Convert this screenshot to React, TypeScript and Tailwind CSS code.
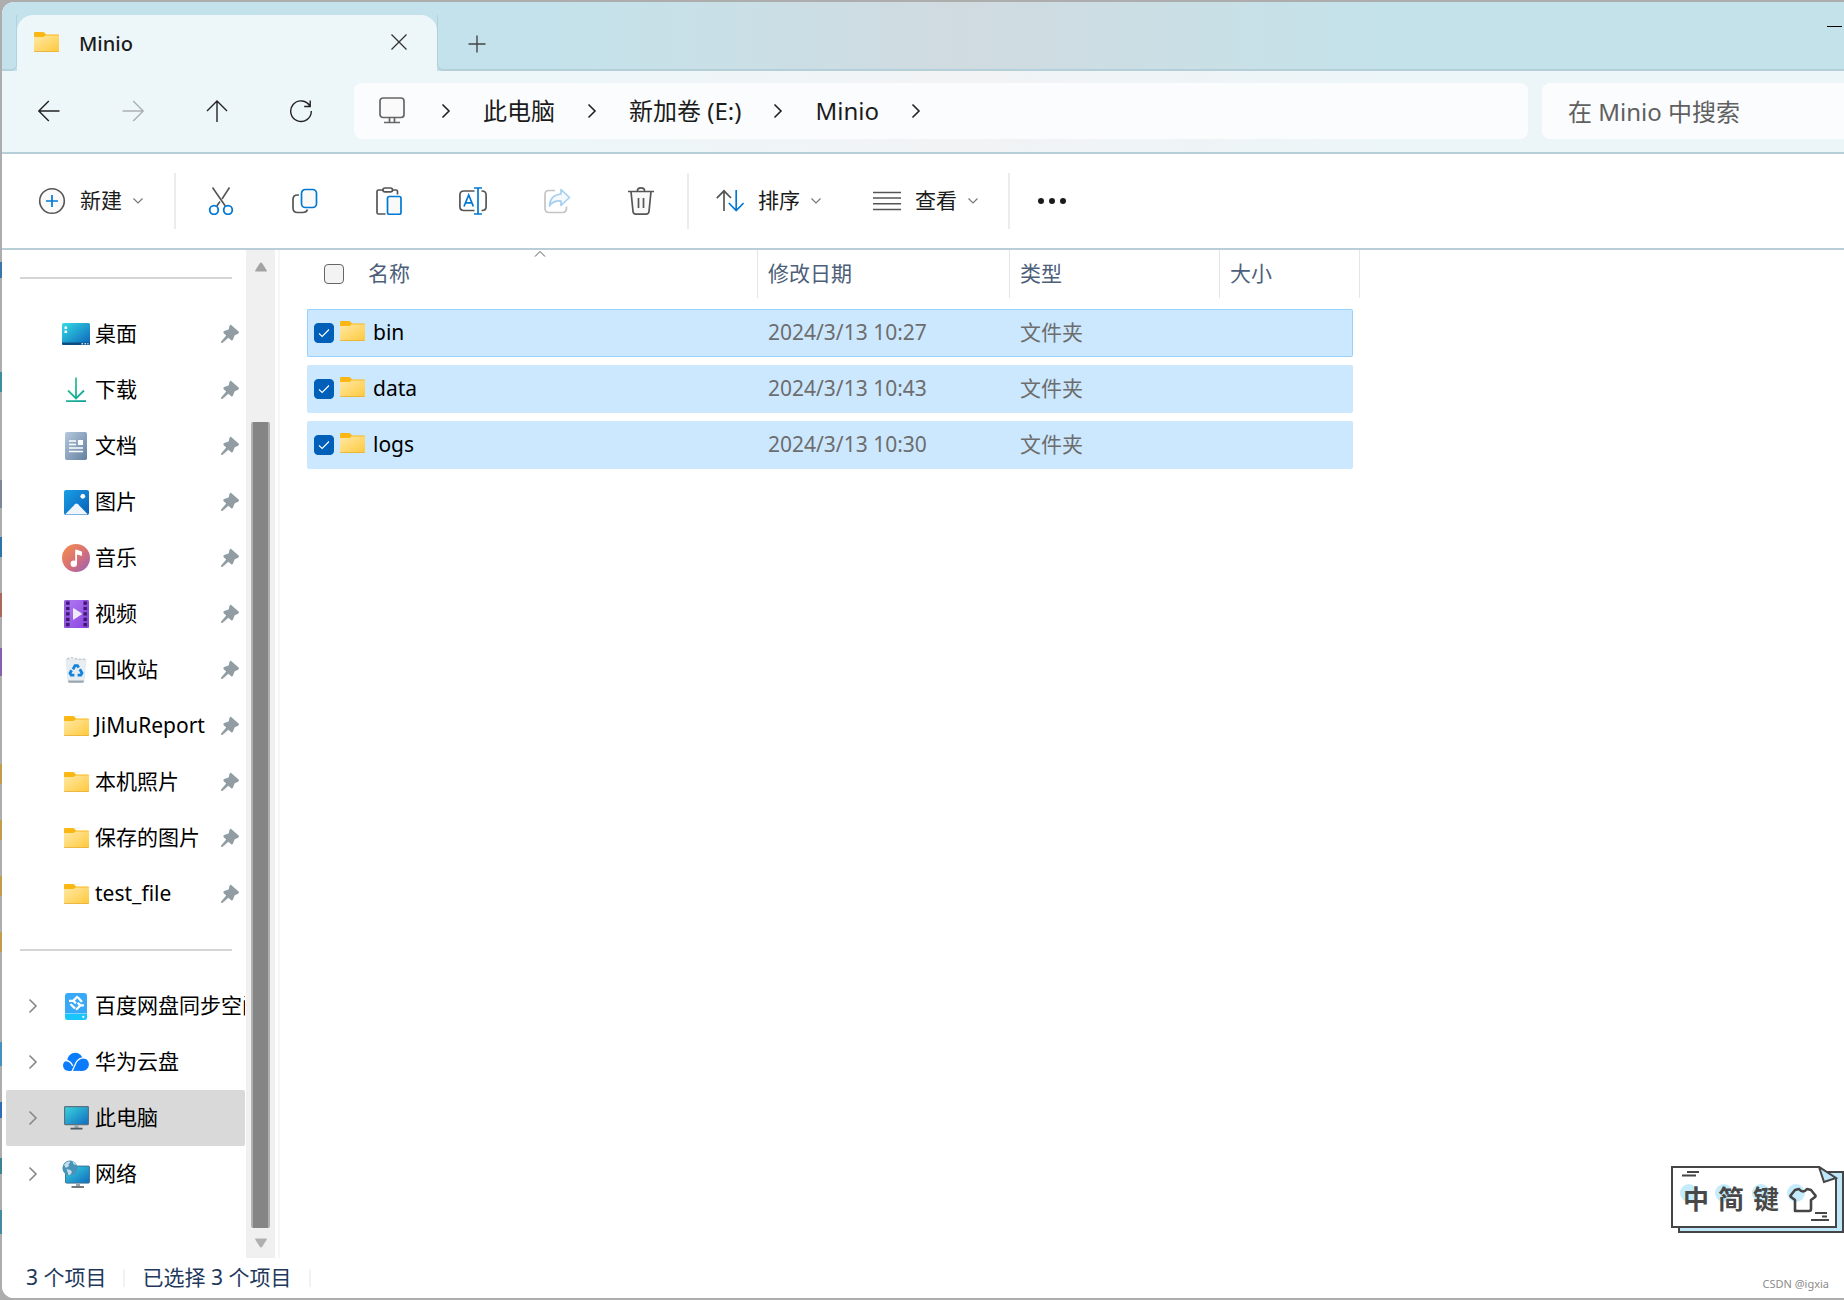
import { Fragment, ReactNode, useState } from "react";

interface PlaceProps {
    name: string;
    icon: ReactNode;
    pinned?: boolean;
    current?: boolean;
}

interface FileProps {
    name: string;
    modified: string;
    type: string;
}

const FolderIcon = () => (
    <svg viewBox="0 0 25 20" className="h-5 w-[25px] shrink-0" aria-hidden="true">
        <defs>
            <linearGradient id="folder" x1="0" y1="0" x2="1" y2="1">
                <stop offset="0" stopColor="#ffe9a6" />
                <stop offset="1" stopColor="#ffc83a" />
            </linearGradient>
        </defs>
        <path d="M1 0h8q1 0 1.600.7L12 2.500h12q1 0 1 1V10H0V1q0-1 1-1z" fill="#fbb716" />
        <path d="M0 5h8.500q1 0 1.700-.6l.6-.5q.4-.3 1-.3H25V19q0 1-1 1H1q-1 0-1-1z" fill="url(#folder)" />
        <path d="M.3 19.500h24.400" stroke="#eab23c" strokeWidth=".9" />
    </svg>
);

const PinIcon = () => (
    <svg viewBox="0 0 20 20" className="size-5 shrink-0" aria-hidden="true">
        <path
            d="M11.200 1.100 18.600 7.600Q19.600 8.600 18.400 9.400L14.600 11.400 13 15.600Q12.200 17.200 10.900 16L8.400 13.700 3 18.600Q1.600 19.400 1 18.800.6 18 1.400 17.200L6.200 11.600 3.700 9.300Q2.600 7.900 4.200 7.100L8.600 5.400 9.600 1.800Q10.200.4 11.200 1.100Z"
            fill="#929da3"
        />
    </svg>
);

const DesktopIcon = () => (
    <svg viewBox="0 0 28 22" className="h-[22px] w-7" aria-hidden="true">
        <defs>
            <linearGradient id="desktop" x1="0" y1="0" x2="1" y2="1">
                <stop offset="0" stopColor="#35dbe2" />
                <stop offset=".5" stopColor="#1f9fd0" />
                <stop offset="1" stopColor="#0d60bb" />
            </linearGradient>
        </defs>
        <rect width="28" height="22" rx="1.500" fill="url(#desktop)" />
        <path d="M0 19.500h28v1q0 1.500-1.500 1.500h-25Q0 22 0 20.500z" fill="#0c4d80" />
        <path d="M2.500 3.500h2.600v2.600H2.500zM2.500 7.500h2.600v2.600H2.500z" fill="#fff" />
        <path d="M19.500 20h1.600v1.600h-1.600zM22.500 20h1.600v1.600h-1.600zM25.300 20h1.200v1.600h-1.200z" fill="#bfe3f7" />
    </svg>
);

const DownloadIcon = () => (
    <svg viewBox="0 0 28 28" className="size-7" fill="none" strokeWidth="1.800" aria-hidden="true">
        <defs>
            <linearGradient id="download" gradientUnits="userSpaceOnUse" x1="4" y1="2" x2="24" y2="26">
                <stop offset="0" stopColor="#3ed08c" />
                <stop offset="1" stopColor="#0b9d9d" />
            </linearGradient>
        </defs>
        <path d="M14 1.500V22M6 14.500l8 8 8-8M4 25.200h20" stroke="url(#download)" />
    </svg>
);

const DocumentIcon = () => (
    <svg viewBox="0 0 22 28" className="h-7 w-[22px]" aria-hidden="true">
        <defs>
            <linearGradient id="document" x1="0" y1="0" x2="1" y2="1">
                <stop offset="0" stopColor="#b4c9de" />
                <stop offset="1" stopColor="#64809f" />
            </linearGradient>
        </defs>
        <rect width="22" height="28" rx="1.800" fill="url(#document)" />
        <path d="M4 9h7M4 12.500h7M4 16h14M4 19.500h14" stroke="#fff" strokeWidth="1.600" />
        <path d="M13 8h5v5h-5z" fill="#fff" />
    </svg>
);

const PictureIcon = () => (
    <svg viewBox="0 0 25 25" className="size-[25px]" aria-hidden="true">
        <defs>
            <linearGradient id="picture" x1="0" y1="0" x2="1" y2="1">
                <stop offset="0" stopColor="#1a9fe6" />
                <stop offset="1" stopColor="#0960b6" />
            </linearGradient>
        </defs>
        <rect width="25" height="25" rx="2" fill="url(#picture)" />
        <path d="M1.500 24 11 14.200q1.500-1.300 3 0L23.500 24q-.5.500-1.500.5H3q-1 0-1.500-.5z" fill="#eef5fc" />
        <circle cx="18.800" cy="6.300" r="2.400" fill="#fff" />
    </svg>
);

const MusicIcon = () => (
    <svg viewBox="0 0 28 28" className="size-7" aria-hidden="true">
        <defs>
            <linearGradient id="music" x1="0" y1="0" x2="1" y2="1">
                <stop offset=".1" stopColor="#f28a51" />
                <stop offset=".55" stopColor="#d56f78" />
                <stop offset="1" stopColor="#9460bd" />
            </linearGradient>
        </defs>
        <circle cx="14" cy="14" r="14" fill="url(#music)" />
        <circle cx="11.800" cy="19.800" r="3.200" fill="#fff" />
        <path d="M13.200 19.800V6.200q0-.8.800-.6l5.200 1.700q.8.300.8 1v3q0 .8-.8.500L15 10.400v9.400z" fill="#fff" />
    </svg>
);

const VideoIcon = () => (
    <svg viewBox="0 0 25 28" className="h-7 w-[25px]" aria-hidden="true">
        <defs>
            <linearGradient id="video" x1="0" y1="0" x2="1" y2="1">
                <stop offset="0" stopColor="#b07cf2" />
                <stop offset="1" stopColor="#8a42e0" />
            </linearGradient>
        </defs>
        <rect width="25" height="28" rx="1.500" fill="url(#video)" />
        <path d="M0 1.500Q0 0 1.500 0H6v28H1.500Q0 28 0 26.500zM19 0h4.500Q25 0 25 1.500v25q0 1.500-1.500 1.500H19z" fill="#8247d0" opacity=".5" />
        <path d="M3.800 1.500v26M21.200 1.500v26" stroke="#3b1a70" strokeWidth="3.400" strokeDasharray="3.200 2.200" />
        <path d="M9 8.800q0-1 .9-.5l7.600 5q.8.600 0 1.200l-7.600 5q-.9.500-.9-.5z" fill="#eee8f8" />
    </svg>
);

const RecycleIcon = () => (
    <svg viewBox="0 0 22 26" className="h-[26px] w-[22px]" aria-hidden="true">
        <path d="M1 2.500h20L19 24q-.2 1.500-1.500 1.500h-13Q3.200 25.500 3 24z" fill="#e8edf1" stroke="#dbe0e4" strokeWidth=".6" />
        <path d="M3 23.500h16l-.3 1.500q-.2.700-1 .7H4.300q-.8 0-1-.7z" fill="#9ba7b0" />
        <path d="M2 2q4-2 8-.6T20 2" stroke="#c3ccd2" strokeWidth="1.600" strokeDasharray="2.500 1.500" fill="none" />
        <path d="m8 12.300 2-3.700h2.500l1.200 2M14.800 12.200l2.200 3.900-1.200 2h-3.200M9.400 18.100H6.200l-1.200-2 1.600-2.900" stroke="#1583dc" strokeWidth="2.800" fill="none" />
    </svg>
);

const SyncSpaceIcon = () => (
    <svg viewBox="0 0 24 27" className="h-[27px] w-6" aria-hidden="true">
        <rect x="1" y="0" width="22" height="24" rx="3" fill="#38a8f8" />
        <path d="M1 20.500h22v4q0 2.500-2.500 2.500h-17Q1 27 1 24.500z" fill="#18c6fb" />
        <path d="M1 20.500h22" stroke="#7fd4ff" strokeWidth="1" />
        <circle cx="19.300" cy="23.800" r="1.100" fill="#fff" />
        <path d="M13.800 3.300 9.300 7.800l2.700 2.500M5 7.800h4.300M12 16.800l4.500-4.500-2.900-2.500M20 12.300h-3.500M14 4.600l4 4.400M11 15.500l-4.500-4.500" stroke="#fff" strokeWidth="2.300" fill="none" />
    </svg>
);

const CloudIcon = () => (
    <svg viewBox="0 0 28 20" className="h-5 w-7" aria-hidden="true">
        <g fill="#0a7cfb">
            <circle cx="6.200" cy="13.500" r="5.200" />
            <circle cx="13.200" cy="8.500" r="7.800" />
            <circle cx="20.400" cy="12.400" r="6.500" />
            <path d="M6 10h15v8.900H6z" />
        </g>
        <path d="M2.500 8.500q6-.3 8.200 5.500M24.500 6.200q-6.500-1.500-10.200 3.800-2.200 5-4.300 9.500" stroke="#fff" strokeWidth="1.300" fill="none" />
    </svg>
);

const ComputerIcon = () => (
    <svg viewBox="0 0 25 24" className="h-6 w-[25px]" aria-hidden="true">
        <defs>
            <linearGradient id="screen" x1="0" y1="0" x2="1" y2="1">
                <stop offset="0" stopColor="#3ad6df" />
                <stop offset="1" stopColor="#0f6bbf" />
            </linearGradient>
        </defs>
        <rect x=".6" y=".6" width="23.800" height="18" rx=".8" fill="url(#screen)" stroke="#5a7180" strokeWidth="1.200" />
        <path d="M10.500 19.200h4V22h-4z" fill="#9aa6ae" />
        <path d="M6.500 22.600h12" stroke="#4d5961" strokeWidth="1.600" />
    </svg>
);

const NetworkIcon = () => (
    <svg viewBox="0 0 28 28" className="size-7" aria-hidden="true">
        <rect x="3.600" y="6.100" width="23.800" height="17" rx=".8" fill="url(#screen)" stroke="#3f7396" strokeWidth="1" />
        <path d="M14 23.600h4v2.800h-4z" fill="#9aa6ae" />
        <path d="M9.500 27h12.500" stroke="#4d5961" strokeWidth="1.600" />
        <circle cx="8" cy="8" r="7.600" fill="#4a93b8" />
        <path d="M2 5q1.500-3 5-3.800l1.500 1.300-2 1.500.5 2-3 2zM4.500 9l4 1 1.500 2-2 3H6.500zM10 1q3 .8 4.600 4l-2.600-.5z" fill="#c3dde9" />
    </svg>
);

const NewIcon = () => (
    <svg viewBox="0 0 28 28" className="size-7" fill="none" aria-hidden="true">
        <circle cx="14" cy="14" r="12.300" fill="#f9f9f9" stroke="#555" strokeWidth="1.600" />
        <path d="M14 8v12M8 14h12" stroke="#0078d4" strokeWidth="1.700" />
    </svg>
);

const CutIcon = () => (
    <svg viewBox="0 0 28 28" className="size-7" fill="none" strokeWidth="1.600" aria-hidden="true">
        <path d="M5.500.5 18.300 19M22.500.5 15 12M13 14.500 9.800 19" stroke="#555" />
        <circle cx="7" cy="23" r="4.300" stroke="#0078d4" strokeWidth="1.800" />
        <circle cx="21" cy="23" r="4.300" stroke="#0078d4" strokeWidth="1.800" />
    </svg>
);

const CopyIcon = () => (
    <svg viewBox="0 0 28 28" className="size-7" fill="none" strokeWidth="1.700" aria-hidden="true">
        <path d="M8 8H6.500Q2 8 2 12.500v8.500Q2 25.500 6.500 25.500h5.500q3.500 0 4.500-3" stroke="#555" />
        <rect x="10.500" y="2.500" width="15" height="18" rx="3.800" fill="#f9f9f9" stroke="#0078d4" />
    </svg>
);

const PasteIcon = () => (
    <svg viewBox="0 0 28 28" className="size-7" fill="none" strokeWidth="1.700" aria-hidden="true">
        <path d="M8 3H3.500Q2 3 2 4.500v21Q2 27 3.500 27h7M17.500 3h3.500q1.500 0 1.500 1.500v3" stroke="#555" />
        <rect x="8" y="1" width="9.500" height="3.800" rx="1.900" stroke="#555" />
        <rect x="12.500" y="9.500" width="13.500" height="17.800" rx="1.800" fill="#f9f9f9" stroke="#0078d4" />
    </svg>
);

const RenameIcon = () => (
    <svg viewBox="0 0 28 28" className="size-7" fill="none" strokeWidth="1.700" aria-hidden="true">
        <path d="M15.500 4H5Q.9 4 .9 8v11.500q0 4 4.100 4h10.500M22.500 4h.5q4.100 0 4.100 4v11.500q0 4-4.100 4h-.5" stroke="#555" />
        <path d="M15 1h8M15 27h8M19 1v26" stroke="#0078d4" />
        <path d="m5 19.500 4.700-11.500 4.700 11.500M6.700 15.800h6" stroke="#0078d4" />
    </svg>
);

const ShareIcon = () => (
    <svg viewBox="0 0 28 28" className="size-7" fill="none" strokeWidth="1.700" aria-hidden="true">
        <path d="M12 3.500H6Q2 3.500 2 7.500V21q0 4.500 4 4.500h13.500q4 0 4-4.500v-1.500" stroke="#c4c4c4" />
        <path d="M18 2.500 26.500 10.500 18 18.500V14Q10 13.500 6.500 19 7 8 18 7z" fill="#f4f9fd" stroke="#a6cff0" strokeLinejoin="round" />
    </svg>
);

const DeleteIcon = () => (
    <svg viewBox="0 0 28 28" className="size-7" fill="none" strokeWidth="1.700" aria-hidden="true">
        <path d="M4 4.500 6 24.500Q6.300 27.200 9 27.200h10q2.700 0 3-2.700l2-20" fill="#f9f9f9" stroke="#555" />
        <path d="M1 4.500h26M10.300 4.500Q10.300.9 14 .9t3.700 3.600M11.500 11v10M16.500 11v10" stroke="#555" />
    </svg>
);

const SortIcon = () => (
    <svg viewBox="0 0 28 28" className="size-7" fill="none" strokeWidth="1.700" aria-hidden="true">
        <path d="M8 24V3.800M.8 11.200 8 3.800l7 7.200" stroke="#555" />
        <path d="M20.200 3v20.500M12.800 16l7.400 7.500L27.600 16" stroke="#0078d4" />
    </svg>
);

const ViewIcon = () => (
    <svg viewBox="0 0 28 28" className="size-7" aria-hidden="true">
        <path d="M0 5.500h28M0 11h28M0 16.800h28M0 22.500h28" stroke="#555" strokeWidth="1.600" />
    </svg>
);

const ChevronDown = () => (
    <svg viewBox="0 0 12 12" className="size-3" fill="none" aria-hidden="true">
        <path d="m1.500 3.500 4.500 4.500 4.500-4.500" stroke="#777" strokeWidth="1.200" />
    </svg>
);

const ChevronRight = ({ color }: { color: string }) => (
    <svg viewBox="0 0 16 16" className="size-4 shrink-0" fill="none" aria-hidden="true">
        <path d="m4.500 1.500 6.500 6.500-6.500 6.500" stroke={color} strokeWidth="1.600" />
    </svg>
);

const pinnedPlaces: PlaceProps[] = [
    { name: "桌面", icon: <DesktopIcon />, pinned: true },
    { name: "下载", icon: <DownloadIcon />, pinned: true },
    { name: "文档", icon: <DocumentIcon />, pinned: true },
    { name: "图片", icon: <PictureIcon />, pinned: true },
    { name: "音乐", icon: <MusicIcon />, pinned: true },
    { name: "视频", icon: <VideoIcon />, pinned: true },
    { name: "回收站", icon: <RecycleIcon />, pinned: true },
    { name: "JiMuReport", icon: <FolderIcon />, pinned: true },
    { name: "本机照片", icon: <FolderIcon />, pinned: true },
    { name: "保存的图片", icon: <FolderIcon />, pinned: true },
    { name: "test_file", icon: <FolderIcon />, pinned: true },
];

const rootPlaces: PlaceProps[] = [
    { name: "百度网盘同步空间", icon: <SyncSpaceIcon /> },
    { name: "华为云盘", icon: <CloudIcon /> },
    { name: "此电脑", icon: <ComputerIcon />, current: true },
    { name: "网络", icon: <NetworkIcon /> },
];

const files: FileProps[] = [
    { name: "bin", modified: "2024/3/13 10:27", type: "文件夹" },
    { name: "data", modified: "2024/3/13 10:43", type: "文件夹" },
    { name: "logs", modified: "2024/3/13 10:30", type: "文件夹" },
];

const TitleBar = () => (
    <div className="flex h-[69px] bg-linear-to-r from-[#c4e2eb] from-30% via-[#d0dbe0] via-52% to-[#c4e2ea] to-75% pt-[13px]">
        <div className="w-[15px] shrink-0 rounded-br-md border-r border-b-2 border-[#b5d1dc]"></div>
        <div className="-mb-0.5 flex w-[420px] shrink-0 items-center rounded-t-2xl bg-[#edf6f9] pr-7 pb-1 pl-[17px]">
            <FolderIcon />
            <span className="ml-5 pt-1 text-xl font-medium text-[#1b1b1b]">Minio</span>
            <button type="button" aria-label="关闭标签页" className="ml-auto">
                <svg viewBox="0 0 20 20" className="size-5" aria-hidden="true">
                    <path d="m2.500 2.500 15 15m0-15-15 15" stroke="#333" strokeWidth="1.300" />
                </svg>
            </button>
        </div>
        <div className="flex grow justify-between rounded-bl-md border-b-2 border-l border-[#b5cfd8] pr-0.5 pl-[29px]">
            <button type="button" aria-label="新建标签页" className="pt-1">
                <svg viewBox="0 0 20 20" className="size-5" aria-hidden="true">
                    <path d="M10 1.500v17M1.500 10h17" stroke="#444" strokeWidth="1.400" />
                </svg>
            </button>
            <button type="button" aria-label="最小化" className="flex h-[23px] items-center">
                <span className="h-px w-[15px] bg-black"></span>
            </button>
        </div>
    </div>
);

const NavButton = ({ label, children, disabled }: { label: string; children: ReactNode; disabled?: boolean }) => (
    <button type="button" aria-label={label} disabled={disabled} className="flex h-14 w-[84px] shrink-0 items-center justify-center text-[#222] disabled:text-[#aab0b3]">
        <svg viewBox="0 0 24 24" className="size-6" fill="none" stroke="currentColor" strokeWidth="1.400" aria-hidden="true">
            {children}
        </svg>
    </button>
);

const AddressBar = () => {
    const [search, setSearch] = useState("");
    return (
        <div className="flex items-center border-b-2 border-[#b6cfd8] bg-linear-to-r from-[#edf6f9] from-30% via-[#f1f3f4] via-52% to-[#ecf5f8] to-75% pt-3 pb-[13px] pl-[5px]">
            <NavButton label="后退">
                <path d="M22.500 12H1.800M11.800 2 1.800 12l10 10" />
            </NavButton>
            <NavButton label="前进" disabled>
                <path d="M1.500 12h20.700M12.200 2l10 10-10 10" />
            </NavButton>
            <NavButton label="向上">
                <path d="M12 23V2M2 12 12 2l10 10" />
            </NavButton>
            <NavButton label="刷新">
                <path d="M21 7.200a10.300 10.300 0 1 0 1.300 4.800M21.200 1.500v6h-6" />
            </NavButton>
            <nav aria-label="地址" className="ml-[11px] flex h-14 grow items-center gap-[29px] rounded-lg bg-[#fbfcfe] px-[25px] text-2xl text-[#1b1b1b]">
                <svg viewBox="0 0 26 28" className="mr-1 h-7 w-[26px] shrink-0" fill="none" stroke="#666" strokeWidth="1.700" aria-hidden="true">
                    <rect x="1" y="1" width="24" height="19.500" rx="3" fill="#fafafa" />
                    <path d="M10.500 20.500v4.500M15.500 20.500v4.500M5 25.500h16" />
                </svg>
                <ChevronRight color="#222" />
                <a href="#pc">此电脑</a>
                <ChevronRight color="#222" />
                <a href="#e">新加卷 (E:)</a>
                <ChevronRight color="#222" />
                <a href="#minio">Minio</a>
                <ChevronRight color="#222" />
            </nav>
            <input
                type="search"
                aria-label="搜索"
                placeholder="在 Minio 中搜索"
                value={search}
                onChange={(e) => setSearch(e.target.value)}
                className="ml-3.5 h-14 w-[302px] shrink-0 rounded-l-lg bg-[#fbfcfe] px-[26px] text-2xl text-[#1b1b1b] placeholder:text-[#606060] focus:outline-none"
            />
        </div>
    );
};

const IconButton = ({ label, icon, disabled }: { label: string; icon: ReactNode; disabled?: boolean }) => (
    <button type="button" aria-label={label} disabled={disabled} className="flex h-14 w-[84px] items-center justify-center">
        {icon}
    </button>
);

const MenuButton = ({ label, icon }: { label: string; icon: ReactNode }) => (
    <button type="button" className="flex h-14 items-center text-[21px] text-[#1b1b1b]">
        {icon}
        <span className="mr-2.5 ml-3.5">{label}</span>
        <ChevronDown />
    </button>
);

const Divider = () => <div className="h-14 w-0.5 shrink-0 bg-[#ececec]"></div>;

const CommandBar = () => (
    <div className="flex items-center border-b-2 border-[#b9cfd7] bg-white pt-[19px] pb-[19px] pl-9">
        <MenuButton label="新建" icon={<NewIcon />} />
        <div className="w-[30px]"></div>
        <Divider />
        <div className="flex pr-1 pl-[3px]">
            <IconButton label="剪切" icon={<CutIcon />} />
            <IconButton label="复制" icon={<CopyIcon />} />
            <IconButton label="粘贴" icon={<PasteIcon />} />
            <IconButton label="重命名" icon={<RenameIcon />} />
            <IconButton label="共享" icon={<ShareIcon />} disabled />
            <IconButton label="删除" icon={<DeleteIcon />} />
        </div>
        <Divider />
        <div className="flex gap-[51px] pr-[29px] pl-[27px]">
            <MenuButton label="排序" icon={<SortIcon />} />
            <MenuButton label="查看" icon={<ViewIcon />} />
        </div>
        <Divider />
        <button type="button" aria-label="查看更多" className="flex h-14 items-center gap-[5px] px-7">
            <span className="size-1.5 rounded-full bg-[#1b1b1b]"></span>
            <span className="size-1.5 rounded-full bg-[#1b1b1b]"></span>
            <span className="size-1.5 rounded-full bg-[#1b1b1b]"></span>
        </button>
    </div>
);

const Place = ({ place }: { place: PlaceProps }) => (
    <a
        href={"#" + place.name}
        className={
            place.current
                ? "mr-px ml-1 flex h-14 items-center overflow-hidden rounded-xs bg-[#d9d9d9] pl-[19px]"
                : "mr-px ml-1 flex h-14 items-center overflow-hidden pl-[19px]"
        }
    >
        <span className="mr-[21px] w-4 shrink-0">{place.pinned ? null : <ChevronRight color="#888" />}</span>
        <span className="mr-[5px] flex w-7 shrink-0 justify-center">{place.icon}</span>
        <span className="whitespace-nowrap">{place.name}</span>
        {place.pinned ? (
            <span className="mr-[5px] ml-auto">
                <PinIcon />
            </span>
        ) : null}
    </a>
);

const Separator = () => (
    <div className="flex h-14 items-center pr-3.5 pl-[18px]">
        <hr className="grow border-t-2 border-[#d5d5d5]" />
    </div>
);

const Sidebar = () => (
    <div className="flex shrink-0">
        <nav aria-label="导航窗格" className="w-[244px] text-[21px] text-black">
            <Separator />
            {pinnedPlaces.map((place) => (
                <Place key={place.name} place={place} />
            ))}
            <Separator />
            {rootPlaces.map((place) => (
                <Place key={place.name} place={place} />
            ))}
        </nav>
        <div className="flex w-[29px] flex-col items-center bg-[#f0f0f0]">
            <button type="button" aria-label="向上滚动" className="flex h-[34px] items-center">
                <svg viewBox="0 0 12 10" className="h-2.5 w-3" aria-hidden="true">
                    <path d="M6 .5q.7 0 1.200.8L11.800 8.500V9.500H.2V8.500L4.800 1.300Q5.300.5 6 .5z" fill="#a3a3a3" />
                </svg>
            </button>
            <div className="mt-[138px] w-[19px] grow rounded-xs border-x-2 border-[#b0b0b0] bg-[#858585]"></div>
            <button type="button" aria-label="向下滚动" className="flex h-[30px] items-center">
                <svg viewBox="0 0 12 10" className="h-2.5 w-3" aria-hidden="true">
                    <path d="M6 9.500q-.7 0-1.200-.8L.2 1.500V.5h11.600v1L7.200 8.700Q6.700 9.500 6 9.500z" fill="#b0b0b0" />
                </svg>
            </button>
        </div>
        <div className="ml-[3px] w-0.5 bg-[#f6f6f6]"></div>
    </div>
);

const FileTable = () => {
    const [selected, setSelected] = useState(files.map((file) => file.name));
    const toggle = (name: string) =>
        setSelected(selected.includes(name) ? selected.filter((n) => n !== name) : [...selected, name]);

    return (
        <table className="-mt-2 table-fixed border-separate border-spacing-x-0 border-spacing-y-2 text-left text-[21px]">
            <colgroup>
                <col className="w-[450px]" />
                <col className="w-[252px]" />
                <col className="w-[210px]" />
                <col className="w-[134px]" />
                <col className="w-[7px]" />
            </colgroup>
            <thead className="text-[#4c607a]">
                <tr>
                    <th className="p-0 pb-[3px] font-normal">
                        <div className="relative flex h-12 items-center gap-6 pl-[17px]">
                            <input type="checkbox" aria-label="全选" className="size-5 appearance-none rounded border border-[#666] bg-[#f3f3f3]" />
                            <span>名称</span>
                            <svg viewBox="0 0 12 8" className="absolute top-0 left-1/2 ml-0.5 h-2 w-3" fill="none" aria-hidden="true">
                                <path d="m1 6.500 5-5 5 5" stroke="#555" />
                            </svg>
                        </div>
                    </th>
                    <th className="p-0 pb-[3px] font-normal">
                        <div className="flex h-12 items-center border-l border-[#e5e5e5] pl-2.5">修改日期</div>
                    </th>
                    <th className="p-0 pb-[3px] font-normal">
                        <div className="flex h-12 items-center border-l border-[#e5e5e5] pl-2.5">类型</div>
                    </th>
                    <th className="p-0 pb-[3px] font-normal">
                        <div className="flex h-12 items-center border-l border-[#e5e5e5] pl-2.5">大小</div>
                    </th>
                    <td className="p-0 pb-[3px]">
                        <div className="h-12 border-r border-[#e5e5e5]"></div>
                    </td>
                </tr>
            </thead>
            <tbody className="text-[#6d6d6d]">
                {files.map((file, index) => {
                    const checked = selected.includes(file.name);
                    const color = (checked ? "bg-[#cce8ff] " : "bg-white ") + (index === 0 ? "border-[#99d1ff] " : "border-transparent ");
                    return (
                        <tr key={file.name} className="h-12">
                            <td className={color + "rounded-l-xs border-y border-l p-0"}>
                                <div className="flex items-center pl-1.5">
                                    <span className="grid size-5 place-items-center">
                                        <input
                                            id={file.name}
                                            type="checkbox"
                                            checked={checked}
                                            onChange={() => toggle(file.name)}
                                            className="col-start-1 row-start-1 size-5 appearance-none rounded border border-[#666] bg-white checked:border-[#005fb8] checked:bg-[#005fb8]"
                                        />
                                        {checked ? (
                                            <svg viewBox="0 0 12 12" className="pointer-events-none col-start-1 row-start-1 size-3" fill="none" aria-hidden="true">
                                                <path d="m1 6.500 3.200 3L11 2.500" stroke="#fff" strokeWidth="1.100" />
                                            </svg>
                                        ) : null}
                                    </span>
                                    <span className="mr-2 mb-1 ml-1.5">
                                        <FolderIcon />
                                    </span>
                                    <label htmlFor={file.name} className="text-black">
                                        {file.name}
                                    </label>
                                </div>
                            </td>
                            <td className={color + "border-y p-0 pl-[11px]"}>{file.modified}</td>
                            <td className={color + "border-y p-0 pl-[11px]"}>{file.type}</td>
                            <td className={color + "rounded-r-xs border-y border-r p-0"}></td>
                            <td className="p-0"></td>
                        </tr>
                    );
                })}
            </tbody>
        </table>
    );
};

const StatusBar = () => (
    <div className="flex h-10 items-center bg-white pl-6 text-[21px] text-[#1e395b]">
        <span>3 个项目</span>
        <div className="mx-[17px] h-[18px] w-0.5 bg-[#f2f2f2]"></div>
        <span>已选择 3 个项目</span>
        <div className="mx-[18px] h-[18px] w-0.5 bg-[#f2f2f2]"></div>
    </div>
);

// Floating input method toolbar
const InputMethodBadge = () => (
    <div className="absolute right-0 bottom-[67px] h-[67px] w-[173px]">
        <svg viewBox="0 0 173 67" className="absolute inset-0 size-full" fill="none" stroke="#454545" strokeWidth="2" aria-hidden="true">
            <path d="M8 6h164v60H8z" fill="#bfe7fa" />
            <path d="M1 1h147l17 12v48H1z" fill="#fff" />
            <path d="m148 1 5 15 12-4z" fill="#bfe7fa" />
            <g fill="#c5ecfd" stroke="none">
                <circle cx="18" cy="27" r="9" />
                <circle cx="53" cy="27" r="9" />
                <circle cx="90" cy="27" r="9" />
                <circle cx="125" cy="27" r="9" />
            </g>
            <path d="M16 6h12M11 9.500h14M144 47h12M151 50.500h5M140 54h18" />
            <path d="M124 45V34l-4-3q-1-1 0-2l4-5 4-1q4 5 8 0l4 1 4 5q1 1 0 2l-4 3v9q0 2-2 2h-12q-2 0-2-2z" strokeWidth="2.600" strokeLinejoin="round" />
        </svg>
        <div className="relative flex h-full items-center gap-[9px] pl-3 text-[26px] font-bold text-[#484848]">
            <span>中</span>
            <span>简</span>
            <span>键</span>
        </div>
    </div>
);

// Slice of the window behind, seen along the left edge
const backdrop = [
    { gap: "mt-[262px]", mark: "h-4 bg-[#3a76a8]" },
    { gap: "mt-[94px]", mark: "h-5 bg-[#3c8e9c]" },
    { gap: "mt-[88px]", mark: "h-7 bg-[#7c8796]" },
    { gap: "mt-[29px]", mark: "h-5 bg-[#2e74a8]" },
    { gap: "mt-9", mark: "h-6 bg-[#a96a5c]" },
    { gap: "mt-[31px]", mark: "h-7 bg-[#8560ae]" },
    { gap: "mt-[88px]", mark: "h-5 bg-[#c19c4c]" },
    { gap: "mt-9", mark: "h-5 bg-[#c19c4c]" },
    { gap: "mt-9", mark: "h-5 bg-[#c19c4c]" },
    { gap: "mt-9", mark: "h-5 bg-[#c19c4c]" },
    { gap: "mt-[90px]", mark: "h-6 bg-[#4591bd]" },
    { gap: "mt-9", mark: "h-4 bg-[#2f6cb9]" },
    { gap: "mt-10", mark: "h-4 bg-[#3c8290]" },
    { gap: "mt-9", mark: "h-6 bg-[#4589a0]" },
];

const App = () => {
    return (
        <div className="relative flex min-h-screen bg-[#adadad] pt-0.5 font-['Noto_Sans','Noto_Sans_CJK_SC',sans-serif]">
            <div className="-mt-0.5 w-0.5 shrink-0">
                {backdrop.map((item, index) => (
                    <Fragment key={index}>
                        <div className={item.gap + " " + item.mark}></div>
                    </Fragment>
                ))}
            </div>
            <div className="mb-0.5 flex min-w-0 grow flex-col overflow-hidden rounded-l-xl bg-white">
                <TitleBar />
                <AddressBar />
                <CommandBar />
                <div className="flex grow">
                    <Sidebar />
                    <main className="min-w-0 grow pl-[27px]">
                        <FileTable />
                    </main>
                </div>
                <StatusBar />
            </div>
            <InputMethodBadge />
            <span className="absolute right-[15px] bottom-2 text-[11px] text-[#8c8c8c]">CSDN @igxia</span>
        </div>
    );
};

export default App;
